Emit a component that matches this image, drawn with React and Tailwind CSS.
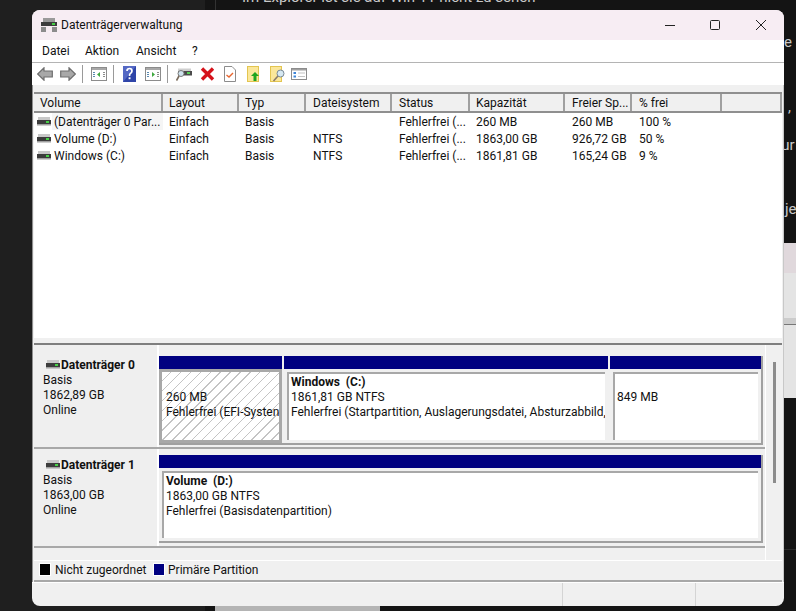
import React from "react";

const font = { fontFamily: 'Roboto, "Noto Sans", sans-serif' };

const columns = [
  { name: "Volume", w: "w-[129px]", pl: "pl-[6px]" },
  { name: "Layout", w: "w-[76px]", pl: "pl-[6px]" },
  { name: "Typ", w: "w-[67px]", pl: "pl-[6px]" },
  { name: "Dateisystem", w: "w-[86px]", pl: "pl-[7px]" },
  { name: "Status", w: "w-[78px]", pl: "pl-[7px]" },
  { name: "Kapazität", w: "w-[95px]", pl: "pl-[6px]" },
  { name: "Freier Sp...", w: "w-[67px]", pl: "pl-[7px]" },
  { name: "% frei", w: "w-[90px]", pl: "pl-[7px]" },
  { name: "", w: "flex-1", pl: "pl-[6px]" },
];

const rows = [
  ["(Datenträger 0 Par...", "Einfach", "Basis", "", "Fehlerfrei (...", "260 MB", "260 MB", "100 %"],
  ["Volume (D:)", "Einfach", "Basis", "NTFS", "Fehlerfrei (...", "1863,00 GB", "926,72 GB", "50 %"],
  ["Windows (C:)", "Einfach", "Basis", "NTFS", "Fehlerfrei (...", "1861,81 GB", "165,24 GB", "9 %"],
];

function DiskIcon({ className }) {
  return (
    <svg className={className} width="14" height="9" viewBox="0 0 14 9">
      <rect x="1" y="0" width="12" height="3" fill="#c8c8c8" />
      <rect x="0" y="3" width="14" height="4" fill="#3c3c3c" />
      <rect x="9" y="4" width="3" height="2" fill="#46d046" />
      <rect x="0" y="7" width="14" height="1.5" fill="#a0a0a0" />
    </svg>
  );
}

function Separator() {
  return <div className="w-px h-[18px] bg-[#9a9a9a] ml-[6px] mr-[8px]" />;
}

function ArrowIcon({ flip }) {
  return (
    <svg width="16" height="14" viewBox="0 0 16 14" className={flip ? "-scale-x-100" : ""}>
      <path d="M0.7 7 L7 0.8 V4 H15.3 V10 H7 V13.2 Z" fill="#a8a8a8" stroke="#6e6e6e" strokeWidth="1.2" />
    </svg>
  );
}

function PaneIcon({ right }) {
  return (
    <svg width="16" height="14" viewBox="0 0 16 14">
      <rect x="0.5" y="0.5" width="15" height="13" fill="#fff" stroke="#8c8c8c" />
      <rect x="1" y="1" width="14" height="2" fill="#a8a8a8" />
      <rect x="2" y="5" width="2" height="1" fill="#5a8ab0" />
      <rect x="2" y="7" width="2" height="1" fill="#5a8ab0" />
      <rect x="2" y="9" width="2" height="1" fill="#5a8ab0" />
      <rect x="12" y="5" width="2" height="1" fill="#8c8c8c" />
      <rect x="12" y="7" width="2" height="1" fill="#8c8c8c" />
      <rect x="12" y="9" width="2" height="1" fill="#8c8c8c" />
      {right ? (
        <path d="M7 5 L10 7.5 L7 10 Z" fill="#3fa83f" />
      ) : (
        <path d="M9 5 L6 7.5 L9 10 Z" fill="#3fa83f" />
      )}
    </svg>
  );
}

function HelpIcon() {
  return (
    <svg width="13" height="16" viewBox="0 0 13 16">
      <rect width="13" height="16" fill="#2f45a8" />
      <path d="M0 0 H13 L0 16 Z" fill="#5468c4" />
      <path d="M4 5 Q4 2.5 6.5 2.5 Q9 2.5 9 5 Q9 6.5 7.4 7.4 Q6.5 8 6.5 10" fill="none" stroke="#fff" strokeWidth="1.7" />
      <rect x="5.6" y="11.3" width="1.9" height="1.9" fill="#fff" />
    </svg>
  );
}

function ConnectIcon() {
  return (
    <svg width="16" height="15" viewBox="0 0 16 15">
      <rect x="2" y="1.5" width="13" height="2.5" fill="#cfcfcf" />
      <rect x="2" y="4" width="14" height="4.5" fill="#4b4b4b" />
      <rect x="11" y="5" width="3" height="2" fill="#58d058" />
      <circle cx="5" cy="6.5" r="3" fill="#cfe3ee" stroke="#7a7a7a" />
      <path d="M3 9 L0.5 13.5" stroke="#7a6a5a" strokeWidth="1.6" />
    </svg>
  );
}

function CrossIcon() {
  return (
    <svg width="15" height="14" viewBox="0 0 15 14">
      <path d="M2 1.5 L13 12.5 M13 1.5 L2 12.5" stroke="#d5121a" strokeWidth="3.4" />
    </svg>
  );
}

function CheckDocIcon() {
  return (
    <svg width="12" height="16" viewBox="0 0 12 16">
      <path d="M0.5 0.5 H8 L11.5 4 V15.5 H0.5 Z" fill="#fff" stroke="#8c8c8c" />
      <path d="M2.5 9 L5 11 L9 7" fill="none" stroke="#e8662f" strokeWidth="1.4" />
    </svg>
  );
}

function FolderUpIcon() {
  return (
    <svg width="12" height="16" viewBox="0 0 12 16">
      <rect x="0.5" y="0.5" width="11" height="15" fill="#fbe79a" stroke="#e3c550" />
      <path d="M8 6 L12 10 H9.5 V15 H6.5 V10 H4 Z" fill="#1fa51f" />
    </svg>
  );
}

function FolderSearchIcon() {
  return (
    <svg width="16" height="16" viewBox="0 0 16 16">
      <rect x="0.5" y="0.5" width="11" height="15" fill="#fbe79a" stroke="#e3c550" />
      <circle cx="10.5" cy="7.5" r="3.5" fill="#d6e8f2" stroke="#7a8a96" />
      <path d="M8 10 L3.5 15" stroke="#8a7a6a" strokeWidth="1.6" />
    </svg>
  );
}

function ListIcon() {
  return (
    <svg width="16" height="12" viewBox="0 0 16 12">
      <rect x="0.5" y="0.5" width="15" height="11" fill="#fff" stroke="#8c8c8c" />
      <rect x="1" y="1" width="14" height="1.5" fill="#a0a0a0" />
      <rect x="2.5" y="4" width="2.5" height="2" fill="#3f86d8" />
      <rect x="2.5" y="7.5" width="2.5" height="2" fill="#3f86d8" />
      <rect x="7" y="4.5" width="7" height="1" fill="#c4c4c4" />
      <rect x="7" y="8" width="7" height="1" fill="#c4c4c4" />
    </svg>
  );
}

function Toolbar() {
  return (
    <div className="h-[22px] shrink-0 bg-white flex items-center pl-[5px]">
      <ArrowIcon />
      <div className="w-[7px]" />
      <ArrowIcon flip />
      <Separator />
      <PaneIcon />
      <Separator />
      <div className="ml-px"><HelpIcon /></div>
      <div className="ml-[9px]"><PaneIcon right /></div>
      <Separator />
      <ConnectIcon />
      <div className="ml-[8px]"><CrossIcon /></div>
      <div className="ml-[9px]"><CheckDocIcon /></div>
      <div className="ml-[11px]"><FolderUpIcon /></div>
      <div className="ml-[11px]"><FolderSearchIcon /></div>
      <div className="ml-[5px]"><ListIcon /></div>
    </div>
  );
}

function VolumeList() {
  return (
    <div className="h-[246px] shrink-0 bg-white border-t-2 border-[#8f8f8f]">
      <div className="flex h-[19px] border-b-2 border-[#8f8f8f] bg-[#f0f0f0]">
        {columns.map((c, i) => (
          <div
            key={i}
            className={`${c.w} ${c.pl} shrink-0 border-r-2 border-[#a0a0a0] leading-[19px] whitespace-nowrap overflow-hidden`}
          >
            {c.name}
          </div>
        ))}
      </div>
      {rows.map((row, r) => (
        <div key={r} className="flex h-[17px] leading-[18px]">
          {row.map((cell, i) => (
            <div key={i} className={`${columns[i].w} shrink-0 whitespace-nowrap overflow-hidden`}>
              {i === 0 ? (
                <div className="flex items-center h-full pl-[3px]">
                  <DiskIcon className="shrink-0 mr-px" />
                  <span className={r === 0 ? "bg-[#f5f5f5] flex-1 pl-[2px]" : "pl-[2px]"}>{cell}</span>
                </div>
              ) : (
                <span className={columns[i].pl}>{cell}</span>
              )}
            </div>
          ))}
        </div>
      ))}
    </div>
  );
}

function DiskLabel({ name, size, h, pt }) {
  return (
    <div className={`${h} ${pt} w-[123px] shrink-0 bg-[#efefef] pl-[9px] leading-[15px]`}>
      <div className="flex items-center">
        <DiskIcon className="ml-[3px] mr-px mb-[3px]" />
        <span className="font-bold">{name}</span>
      </div>
      <div>Basis</div>
      <div>{size}</div>
      <div>Online</div>
    </div>
  );
}

function Partition({ w, h, children, hatched }) {
  return (
    <div className={`${w} shrink-0 flex flex-col`}>
      <div className="h-[13px] bg-[#000080]" />
      {hatched ? (
        <div
          className={`${h} border-[3px] border-[#a8a8a8] pl-[4px] pt-[18px] leading-[15px] whitespace-nowrap overflow-hidden`}
          style={{
            backgroundImage:
              "repeating-linear-gradient(135deg, #ffffff 0 6px, #c4c4c4 6px 7px)",
          }}
        >
          {children}
        </div>
      ) : (
        <div className={`${h} p-[3px]`}>
          <div className="h-full bg-white border-l-2 border-t-2 border-[#a8a8a8] pl-[2px] pt-px leading-[15px] whitespace-nowrap overflow-hidden">
            {children}
          </div>
        </div>
      )}
    </div>
  );
}

function DiskPane() {
  return (
    <div className="h-[217px] shrink-0 border-t-2 border-[#7f7f7f] bg-[#f0f0f0] flex mt-[5px]">
      <div className="w-[731px] shrink-0">
        <div className="flex h-[104px] border-b-2 border-[#a8a8a8]">
          <DiskLabel name="Datenträger 0" size="1862,89 GB" h="h-[102px]" pt="pt-[13px]" />
          <div className="w-[2px] bg-white" />
          <div className="flex-1 pt-[11px]">
            <div className="flex gap-[2px] border-r-2 border-b-2 border-[#a0a0a0] w-[604px]">
              <Partition w="w-[123px]" h="h-[74px]" hatched>
                <div>260 MB</div>
                <div>Fehlerfrei (EFI-Systen</div>
              </Partition>
              <Partition w="w-[324px]" h="h-[74px]">
                <div className="font-bold">Windows &nbsp;(C:)</div>
                <div>1861,81 GB NTFS</div>
                <div>Fehlerfrei (Startpartition, Auslagerungsdatei, Absturzabbild,</div>
              </Partition>
              <Partition w="w-[151px]" h="h-[74px]">
                <div className="pt-[15px]">849 MB</div>
              </Partition>
            </div>
          </div>
        </div>
        <div className="flex h-[99px] border-b-2 border-[#a8a8a8]">
          <DiskLabel name="Datenträger 1" size="1863,00 GB" h="h-[97px]" pt="pt-[9px]" />
          <div className="w-[2px] bg-white" />
          <div className="flex-1 pt-[6px]">
            <div className="border-r-2 border-b-2 border-[#a0a0a0] w-[604px]">
              <Partition w="w-[602px]" h="h-[73px]">
                <div className="font-bold">Volume &nbsp;(D:)</div>
                <div>1863,00 GB NTFS</div>
                <div>Fehlerfrei (Basisdatenpartition)</div>
              </Partition>
            </div>
          </div>
        </div>
      </div>
      <div className="flex-1 border-l border-white relative">
        <div className="absolute left-[7px] top-[17px] w-[3px] h-[121px] bg-[#8c8c8c]" />
      </div>
    </div>
  );
}

function Legend() {
  return (
    <div className="h-[22px] shrink-0 bg-[#f0f0f0] border-t border-white border-b-2 border-b-[#a8a8a8] flex items-center pl-[5px] pb-[2px]">
      <div className="w-[12px] h-[13px] bg-black border border-white mr-[4px]" />
      <span className="w-[98px]">Nicht zugeordnet</span>
      <div className="w-[12px] h-[13px] bg-[#000080] border border-white mr-[3px]" />
      <span>Primäre Partition</span>
    </div>
  );
}

export default function App() {
  return (
    <div className="relative w-[796px] h-[611px] overflow-hidden bg-[#141414]" style={font}>
      {/* page behind the window */}
      <div className="absolute left-0 top-0 w-[205px] h-full bg-[#1f1f1f]" />
      <div className="absolute left-[215px] top-0 w-px h-full bg-[#333]" />
      <div className="absolute left-[242px] top-[-14px] text-[15px] leading-[22px] text-[#c8c8c8] whitespace-nowrap">
        Im Explorer ist sie auf Win 11 nicht zu sehen
      </div>
      <div className="absolute left-[215px] top-[606px] w-[165px] h-[5px] bg-[#b4b4b4]" />
      <div className="absolute left-[784px] top-[31px] text-[15px] text-[#c8c8c8] whitespace-nowrap">e 2</div>
      <div className="absolute left-[788px] top-[96px] text-[15px] text-[#c8c8c8]">,</div>
      <div className="absolute left-[776px] top-[134px] text-[15px] text-[#c8c8c8] whitespace-nowrap">fur</div>
      <div className="absolute left-[785px] top-[198px] text-[15px] text-[#c8c8c8] whitespace-nowrap">je</div>
      <div className="absolute left-[784px] top-[243px] w-[12px] h-[30px] bg-[#e0d8dc]" />
      <div className="absolute left-[784px] top-[273px] w-[12px] h-[125px] bg-[#e4e4e4] flex flex-col">
        <div className="h-[45px]" />
        <div className="h-[7px] bg-[#cccccc] border-b border-[#777]" />
      </div>
      <div className="absolute left-[784px] top-[549px] w-[12px] h-px bg-[#2a2a2a]" />

      <div className="absolute left-[32px] top-[10px] w-[752px] h-[596px] rounded-[8px] overflow-hidden bg-[#f0f0f0] text-[12px] text-[#111] flex flex-col">
        <div className="h-[30px] shrink-0 bg-[#f7edf3] flex items-center pl-[8px]">
          <svg width="18" height="16" viewBox="0 0 18 16" className="mr-[3px]">
            <rect x="3" y="1" width="12" height="4" fill="#9a9a9a" />
            <rect x="1" y="5" width="16" height="4" fill="#3c3c3c" />
            <rect x="12" y="6" width="3" height="2" fill="#46d046" />
            <rect x="1" y="10" width="5" height="5" fill="#8c8c8c" />
            <rect x="12" y="10" width="5" height="5" fill="#8c8c8c" />
          </svg>
          <span className="flex-1">Datenträgerverwaltung</span>
          <svg width="12" height="12" viewBox="0 0 12 12" className="mr-[33px]">
            <path d="M1 6.5 H11" stroke="#222" strokeWidth="1" />
          </svg>
          <svg width="12" height="12" viewBox="0 0 12 12" className="mr-[34px]">
            <rect x="1.5" y="1.5" width="9" height="9" rx="1" fill="none" stroke="#222" />
          </svg>
          <svg width="12" height="12" viewBox="0 0 12 12" className="mr-[17px]">
            <path d="M1 1 L11 11 M11 1 L1 11" stroke="#222" strokeWidth="1" />
          </svg>
        </div>
        <div className="h-[23px] shrink-0 bg-white flex items-center pl-[10px] border-b border-[#b4b4b4]">
          <span className="w-[43px]">Datei</span>
          <span className="w-[51px]">Aktion</span>
          <span className="w-[56px]">Ansicht</span>
          <span>?</span>
        </div>
        <Toolbar />
        <div className="flex-1 flex flex-col pl-px pr-px pt-[7px] border-l border-r border-l-[#8f8f8f] border-r-[#c8c8c8]">
          <VolumeList />
          <DiskPane />
          <Legend />
        </div>
        <div className="h-[24px] shrink-0 flex border-t border-white">
          <div className="w-[531px] border-r border-[#d4d4d4]" />
          <div className="w-[133px] border-r border-[#d4d4d4]" />
        </div>
      </div>
    </div>
  );
}
